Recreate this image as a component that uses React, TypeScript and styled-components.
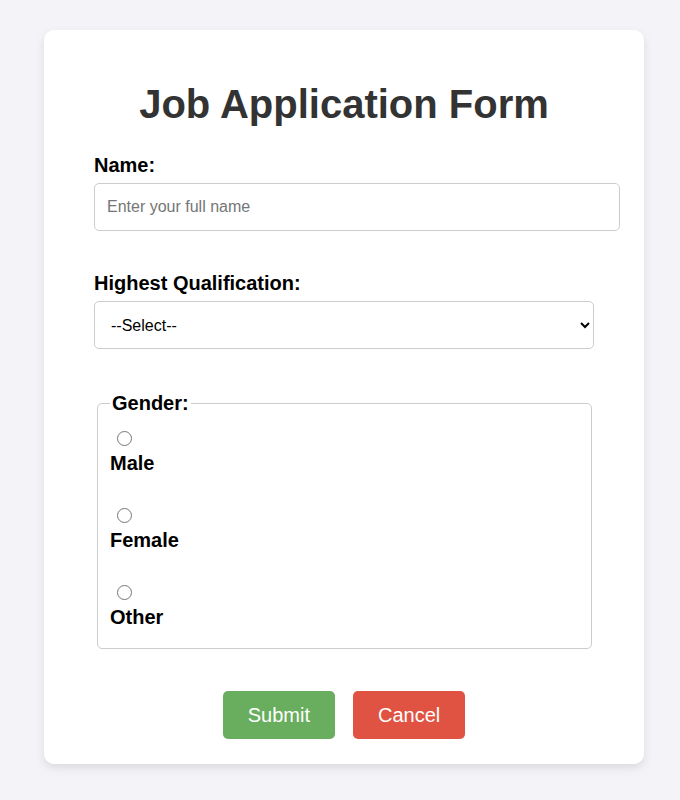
import React from "react";
import styled, { createGlobalStyle } from "styled-components";

const Global = createGlobalStyle`
  body {
    margin: 0;
    background: #f4f4f8;
    font-family: "Liberation Sans", Arial, sans-serif;
  }
`;

const Page = styled.div`
  padding: 30px 36px 36px 44px;
`;

const Card = styled.div`
  width: 600px;
  box-sizing: border-box;
  background: #fff;
  border-radius: 10px;
  box-shadow: 0 4px 10px rgba(0, 0, 0, 0.1);
  padding: 20px 50px 25px;
`;

const Title = styled.h1`
  margin: 31px 0 27px;
  text-align: center;
  font-size: 40px;
  line-height: 46px;
  font-weight: bold;
  color: #333;
`;

const Group = styled.div<{ $gap: number }>`
  margin-bottom: ${(p) => p.$gap}px;
`;

const Label = styled.label`
  display: block;
  font-size: 20px;
  line-height: 23px;
  font-weight: bold;
  color: #000;
  margin-bottom: 6px;
`;

const TextInput = styled.input`
  width: 100%;
  padding: 13px 12px;
  font-family: "Liberation Sans", Arial, sans-serif;
  font-size: 16px;
  line-height: 20px;
  border: 1px solid #ccc;
  border-radius: 5px;
  display: block;
  &::placeholder {
    color: #757575;
  }
`;

const Select = styled.select`
  width: 100%;
  box-sizing: border-box;
  height: 48px;
  padding: 0 12px;
  font-family: "Liberation Sans", Arial, sans-serif;
  font-size: 16px;
  border: 1px solid #ccc;
  border-radius: 5px;
  background: #fff;
  color: #000;
  display: block;
`;

const Fieldset = styled.fieldset`
  margin: 0 2px 0 3px;
  border: 1px solid #ccc;
  border-radius: 5px;
  padding: 13px 12px 19px;
`;

const Legend = styled.legend`
  font-size: 20px;
  line-height: 23px;
  font-weight: bold;
  padding: 0 2px;
  color: #000;
`;

const Option = styled.div<{ $last?: boolean }>`
  margin-bottom: ${(p) => (p.$last ? 0 : 33)}px;
`;

const Radio = styled.input`
  display: block;
  width: 15px;
  height: 15px;
  margin: 3px 0 6px 7px;
`;

const OptionLabel = styled.label`
  display: block;
  font-size: 20px;
  line-height: 23px;
  font-weight: bold;
  color: #000;
`;

const Buttons = styled.div`
  display: flex;
  justify-content: center;
  gap: 18px;
  margin-top: 42px;
`;

const Button = styled.button<{ $color: string }>`
  background: ${(p) => p.$color};
  color: #fff;
  border: none;
  border-radius: 5px;
  padding: 12px 25px;
  font-family: "Liberation Sans", Arial, sans-serif;
  font-size: 20px;
  line-height: 24px;
  cursor: pointer;
`;

export default function App() {
  return (
    <>
      <Global />
      <Page>
        <Card>
          <Title>Job Application Form</Title>
          <form onSubmit={(e) => e.preventDefault()}>
            <Group $gap={41}>
              <Label htmlFor="name">Name:</Label>
              <TextInput id="name" type="text" placeholder="Enter your full name" />
            </Group>
            <Group $gap={43}>
              <Label htmlFor="qual">Highest Qualification:</Label>
              <Select id="qual" defaultValue="">
                <option value="">--Select--</option>
                <option value="hs">High School</option>
                <option value="bachelor">Bachelor's</option>
                <option value="master">Master's</option>
                <option value="phd">PhD</option>
              </Select>
            </Group>
            <Fieldset>
              <Legend>Gender:</Legend>
              <Option>
                <Radio type="radio" name="gender" id="male" />
                <OptionLabel htmlFor="male">Male</OptionLabel>
              </Option>
              <Option>
                <Radio type="radio" name="gender" id="female" />
                <OptionLabel htmlFor="female">Female</OptionLabel>
              </Option>
              <Option $last>
                <Radio type="radio" name="gender" id="other" />
                <OptionLabel htmlFor="other">Other</OptionLabel>
              </Option>
            </Fieldset>
            <Buttons>
              <Button type="submit" $color="#69ae5e">Submit</Button>
              <Button type="button" $color="#e05343">Cancel</Button>
            </Buttons>
          </form>
        </Card>
      </Page>
    </>
  );
}
